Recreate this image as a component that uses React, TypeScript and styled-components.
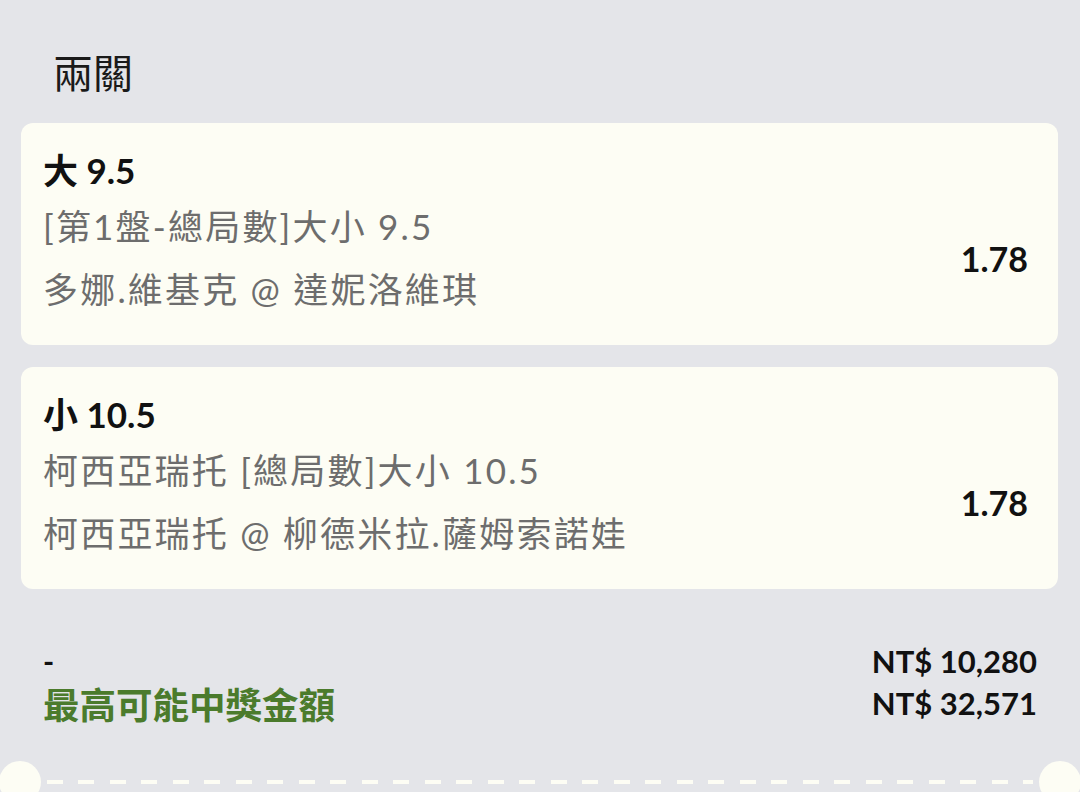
import styled, { createGlobalStyle } from "styled-components";
import type { FunctionComponent } from "react";

// Global
const GlobalStyle = createGlobalStyle`
    html, body {
        margin: 0;
        padding: 0;
        background: #e4e5e9;
        overflow: hidden;
    }
    body {
        font-family: Lato, "Noto Sans CJK TC", sans-serif;
        color: #111111;
    }
`;

// Define Types
type Leg = {
    pick: string;
    market: string;
    match: string;
    odds: string;
};

const legs: Leg[] = [
    {
        pick: "大 9.5",
        market: "[第1盤-總局數]大小 9.5",
        match: "多娜.維基克 @ 達妮洛維琪",
        odds: "1.78",
    },
    {
        pick: "小 10.5",
        market: "柯西亞瑞托 [總局數]大小 10.5",
        match: "柯西亞瑞托 @ 柳德米拉.薩姆索諾娃",
        odds: "1.78",
    },
];

const Slip = styled.main`
    width: 1080px;
    display: flex;
    flex-direction: column;
`;
const SlipTitle = styled.h1`
    margin: 0;
    padding: 43px 0 24px 53px;
    font-family: "Noto Sans CJK TC", sans-serif;
    font-size: 40px;
    font-weight: 400;
    line-height: 56px;
    color: #1a1a1a;
`;
const LegList = styled.section`
    display: flex;
    flex-direction: column;
    gap: 22px;
    padding: 0 22px 0 21px;
`;
const LegCard = styled.article`
    background: #fdfdf4;
    border-radius: 12px;
    padding: 26px 30px 24px 22px;
`;
const LegPick = styled.div`
    font-size: 35px;
    font-weight: 700;
    line-height: 42px;
`;
const LegBody = styled.div`
    margin-top: 4px;
    display: flex;
    align-items: center;
    justify-content: space-between;
`;
const LegLines = styled.div`
    display: flex;
    flex-direction: column;
`;
const LegLine = styled.div`
    font-size: 35px;
    letter-spacing: 2.2px;
    line-height: 63px;
    color: #6d6d6d;
    white-space: nowrap;
`;
const LegOdds = styled.div`
    font-size: 34px;
    font-weight: 700;
    color: #111111;
`;
const Summary = styled.section`
    margin-top: 51px;
    padding: 0 43px;
    display: grid;
    grid-template-columns: 1fr auto;
    grid-auto-rows: 42px;
    align-items: center;
`;
const SummaryLabel = styled.div<{ $accent?: boolean }>`
    font-size: ${(p) => (p.$accent ? "36.5px" : "30px")};
    font-weight: 700;
    color: ${(p) => (p.$accent ? "#4b7b2c" : "#111111")};
`;
const SummaryAmount = styled.div`
    font-size: 31px;
    font-weight: 700;
    text-align: right;
`;
const Perforation = styled.footer`
    margin: 37px -1px 0;
    display: flex;
    align-items: center;
    gap: 6px;
`;
const Notch = styled.span`
    flex: none;
    width: 42px;
    height: 42px;
    border-radius: 50%;
    background: #fdfdf4;
`;
const DashLine = styled.span`
    flex: 1;
    height: 4px;
    background: repeating-linear-gradient(
        to right,
        #fdfdf4 0 16px,
        transparent 16px 31.5px
    );
`;

// Define Page
const App: FunctionComponent = () => {
    return (
        <>
            <GlobalStyle />
            <Slip>
                <SlipTitle>兩關</SlipTitle>
                <LegList>
                    {legs.map((leg) => (
                        <LegCard key={leg.pick}>
                            <LegPick>{leg.pick}</LegPick>
                            <LegBody>
                                <LegLines>
                                    <LegLine>{leg.market}</LegLine>
                                    <LegLine>{leg.match}</LegLine>
                                </LegLines>
                                <LegOdds>{leg.odds}</LegOdds>
                            </LegBody>
                        </LegCard>
                    ))}
                </LegList>
                <Summary>
                    <SummaryLabel>-</SummaryLabel>
                    <SummaryAmount>NT$ 10,280</SummaryAmount>
                    <SummaryLabel $accent>最高可能中獎金額</SummaryLabel>
                    <SummaryAmount>NT$ 32,571</SummaryAmount>
                </Summary>
                <Perforation>
                    <Notch />
                    <DashLine />
                    <Notch />
                </Perforation>
            </Slip>
        </>
    );
};
// Export Page
export default App;
